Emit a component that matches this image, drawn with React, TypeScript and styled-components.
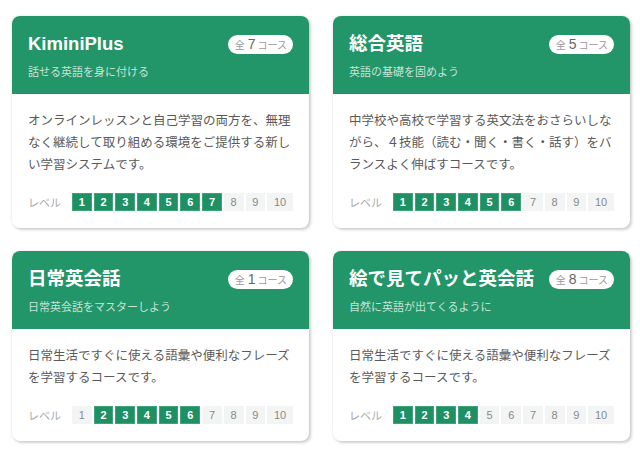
import styled, { createGlobalStyle } from "styled-components";

const GlobalStyle = createGlobalStyle`
    body {
        margin: 0;
        background: #ffffff;
        font-family: "Liberation Sans", "Noto Sans CJK JP", sans-serif;
    }
`;

const Grid = styled.main`
    display: grid;
    grid-template-columns: repeat(2, 297px);
    column-gap: 24px;
    row-gap: 23px;
    padding: 16px 12px;
`;

const Card = styled.section`
    display: flex;
    flex-direction: column;
    background: #fff;
    border-radius: 8px;
    overflow: hidden;
    box-shadow: 0 0 3px rgba(0, 0, 0, 0.12), 2px 2px 3px rgba(0, 0, 0, 0.16);
`;

const Header = styled.header`
    background: #229668;
    padding: 16px 16px 15px;
`;

const TitleRow = styled.div`
    display: flex;
    justify-content: space-between;
    align-items: center;
`;

const Title = styled.h2`
    margin: 0;
    font-size: 18.5px;
    line-height: 24px;
    font-weight: bold;
    color: #fff;
`;

const Badge = styled.span`
    display: flex;
    align-items: center;
    height: 19px;
    padding: 0 6px 0 7px;
    border-radius: 10px;
    background: #fff;
    color: #9a9a9a;
    font-family: "Noto Sans CJK JP", sans-serif;
    font-size: 10px;
`;

const Count = styled.span`
    margin: 0 2px 0 3px;
    font-family: "Liberation Sans", sans-serif;
    font-size: 14px;
    color: #666;
`;

const Subtitle = styled.p`
    margin: 7px 0 0;
    font-family: "Noto Sans CJK JP", sans-serif;
    font-size: 11px;
    line-height: 16px;
    color: rgba(255, 255, 255, 0.75);
`;

const Body = styled.div`
    flex: 1;
    display: flex;
    flex-direction: column;
    justify-content: space-between;
    padding: 15px 16px 17px;
`;

const Description = styled.p`
    margin: 0 0 18px;
    font-family: "Noto Sans CJK JP", sans-serif;
    font-size: 12.5px;
    line-height: 22px;
    color: #5a5a5a;
`;

const Levels = styled.div`
    display: flex;
    align-items: center;
`;

const LevelLabel = styled.span`
    margin-right: 11px;
    font-family: "Noto Sans CJK JP", sans-serif;
    font-size: 11px;
    color: #aaa;
`;

const Boxes = styled.div`
    flex: 1;
    display: flex;
    gap: 2px;
`;

const Box = styled.span<{ $active: boolean }>`
    flex: 1 1 auto;
    display: flex;
    align-items: center;
    justify-content: center;
    height: 18px;
    padding: 0 6px;
    font-size: 11px;
    font-weight: ${props => (props.$active ? "bold" : "normal")};
    color: ${props => (props.$active ? "#fff" : "#888")};
    background: ${props => (props.$active ? "#1f9063" : "#f3f5f5")};
    box-shadow: ${props => (props.$active ? "inset 0 0 0 1px #3ea57b" : "none")};
`;

const courses = [
    {
        title: "KiminiPlus",
        sub: "話せる英語を身に付ける",
        count: 7,
        desc: "オンラインレッスンと自己学習の両方を、無理なく継続して取り組める環境をご提供する新しい学習システムです。",
        from: 1,
        to: 7,
    },
    {
        title: "総合英語",
        sub: "英語の基礎を固めよう",
        count: 5,
        desc: "中学校や高校で学習する英文法をおさらいしながら、４技能（読む・聞く・書く・話す）をバランスよく伸ばすコースです。",
        from: 1,
        to: 6,
    },
    {
        title: "日常英会話",
        sub: "日常英会話をマスターしよう",
        count: 1,
        desc: "日常生活ですぐに使える語彙や便利なフレーズを学習するコースです。",
        from: 2,
        to: 6,
    },
    {
        title: "絵で見てパッと英会話",
        sub: "自然に英語が出てくるように",
        count: 8,
        desc: "日常生活ですぐに使える語彙や便利なフレーズを学習するコースです。",
        from: 1,
        to: 4,
    },
];

const levels = [1, 2, 3, 4, 5, 6, 7, 8, 9, 10];

export default function App() {
    return (
        <>
            <GlobalStyle />
            <Grid>
                {courses.map(course => (
                    <Card key={course.title}>
                        <Header>
                            <TitleRow>
                                <Title>{course.title}</Title>
                                <Badge>
                                    全<Count>{course.count}</Count>コース
                                </Badge>
                            </TitleRow>
                            <Subtitle>{course.sub}</Subtitle>
                        </Header>
                        <Body>
                            <Description>{course.desc}</Description>
                            <Levels>
                                <LevelLabel>レベル</LevelLabel>
                                <Boxes>
                                    {levels.map(n => (
                                        <Box key={n} $active={n >= course.from && n <= course.to}>
                                            {n}
                                        </Box>
                                    ))}
                                </Boxes>
                            </Levels>
                        </Body>
                    </Card>
                ))}
            </Grid>
        </>
    );
}
